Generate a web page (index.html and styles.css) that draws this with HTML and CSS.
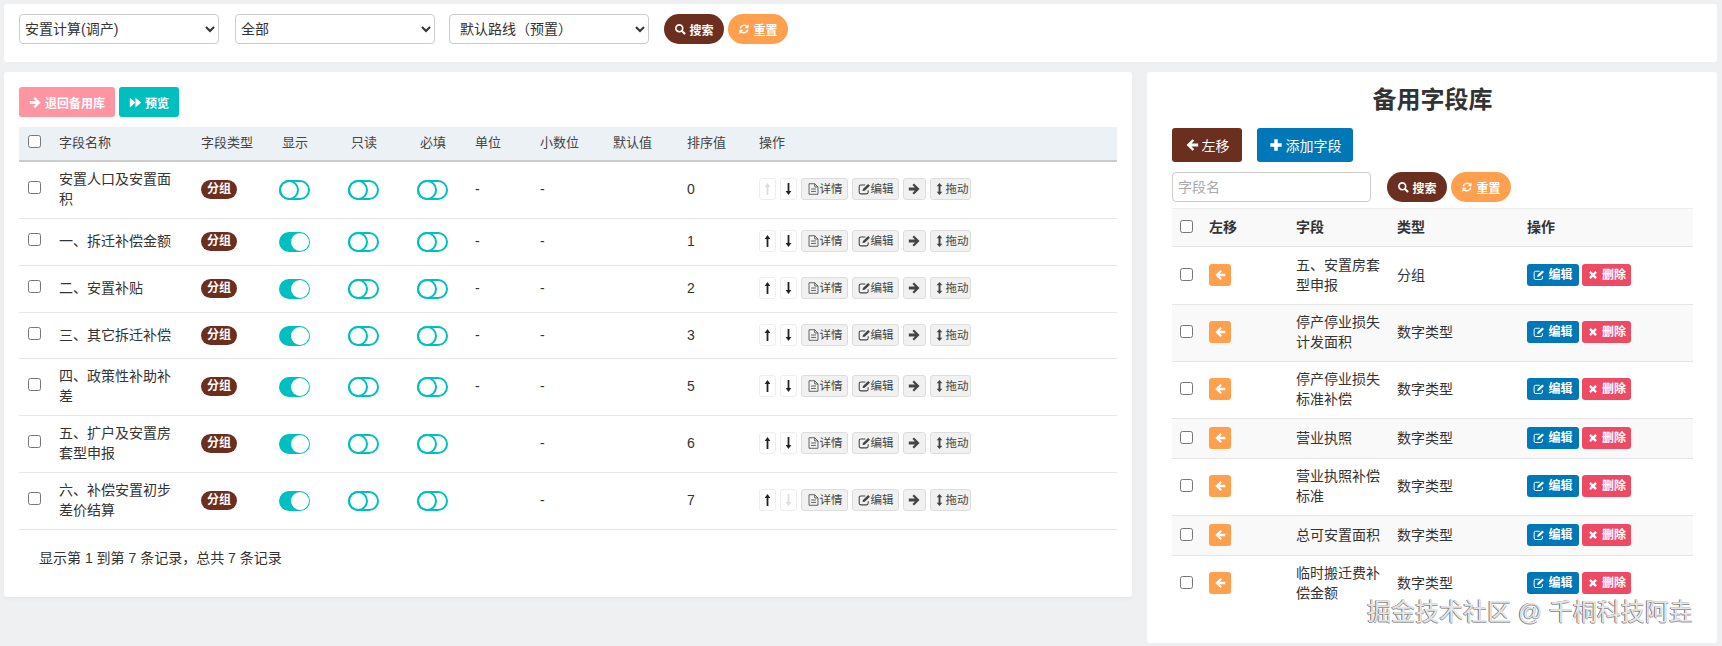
FILE: index.html
```html
<!DOCTYPE html>
<html lang="en">
<head>
    <meta charset="UTF-8">
    <title>字段配置</title>
    <link rel="stylesheet" href="styles.css">
</head>
<body>
    <svg class="icon-defs" xmlns="http://www.w3.org/2000/svg">
        <symbol id="i-search" viewBox="0 0 16 16"><circle cx="7" cy="7" r="4.6" fill="none" stroke="currentColor" stroke-width="2.2"/><path d="M10.5 10.5L14 14" stroke="currentColor" stroke-width="2.8" stroke-linecap="round"/></symbol>
        <symbol id="i-refresh" viewBox="0 0 16 16"><path d="M3 7a5.2 5.2 0 0 1 9-2.2M13 9a5.2 5.2 0 0 1-9 2.2" fill="none" stroke="currentColor" stroke-width="2"/><path d="M14 1.5V7H8.8zM2 14.5V9h5.2z" fill="currentColor"/></symbol>
        <symbol id="i-right" viewBox="0 0 16 16"><path d="M1 6.200h7.500L5.500 3.200 7.400 1.300 14.200 8l-6.800 6.700-1.900-1.900 3-3H1z" fill="currentColor"/></symbol>
        <symbol id="i-left" viewBox="0 0 16 16"><path d="M15 6.200H7.500l3-3L8.600 1.300 1.800 8l6.800 6.700 1.900-1.900-3-3H15z" fill="currentColor"/></symbol>
        <symbol id="i-forward" viewBox="0 0 16 16"><path d="M1 2L8 8l-7 6zM8 2L15 8l-7 6z" fill="currentColor"/></symbol>
        <symbol id="i-plus" viewBox="0 0 16 16"><path d="M6 1.500h4V6h4.500v4H10v4.500H6V10H1.500V6H6z" fill="currentColor"/></symbol>
        <symbol id="i-times" viewBox="0 0 16 16"><path d="M2.800 5l2.200-2.200 3 3 3-3L13.200 5l-3 3 3 3-2.200 2.200-3-3-3 3L2.800 11l3-3z" fill="currentColor"/></symbol>
        <symbol id="i-edit" viewBox="0 0 16 16"><path d="M12.500 9.500V12a2 2 0 0 1-2 2H3.500a2 2 0 0 1-2-2V5a2 2 0 0 1 2-2H9" fill="none" stroke="currentColor" stroke-width="1.300"/><path d="M5.500 10.500l.6-2.600 6.400-6 2.200 2.200-6.400 6z" fill="currentColor"/></symbol>
        <symbol id="i-file" viewBox="0 0 16 16"><path d="M2.500 1.500h7l4 4v9h-11zM9.500 1.500v4h4M5 8h6M5 11h6" fill="none" stroke="currentColor" stroke-width="1"/></symbol>
        <symbol id="i-up" viewBox="0 0 16 16"><path d="M8 .5L11.500 5.500H9.100v10H6.900v-10H4.500z" fill="currentColor"/></symbol>
        <symbol id="i-down" viewBox="0 0 16 16"><path d="M8 15.500L11.500 10.500H9.100V.5H6.900v10H4.500z" fill="currentColor"/></symbol>
        <symbol id="i-drag" viewBox="0 0 16 16"><path d="M8 .5L11.500 4.500H9.200v7h2.300L8 15.500 4.500 11.500h2.300v-7H4.500z" fill="currentColor"/></symbol>
    </svg>

    <div class="top-bar">
        <select class="top-select"><option>安置计算(调产)</option></select>
        <select class="top-select second-select"><option>全部</option></select>
        <select class="top-select route-select"><option>默认路线（预置）</option></select>
        <div class="pill-group">
            <button class="btn pill brown"><svg class="ico"><use href="#i-search"/></svg>搜索</button>
            <button class="btn pill orange"><svg class="ico"><use href="#i-refresh"/></svg>重置</button>
        </div>
    </div>

    <div class="main">
        <div class="panel left-panel">
            <div class="left-tools">
                <button class="btn tool pink"><svg class="ico"><use href="#i-right"/></svg>退回备用库</button>
                <button class="btn tool teal"><svg class="ico"><use href="#i-forward"/></svg>预览</button>
            </div>
            <table class="field-table">
                <colgroup>
                    <col class="c-check"><col class="c-name"><col class="c-type"><col class="c-sw"><col class="c-sw"><col class="c-unit"><col class="c-dec"><col class="c-def"><col class="c-order"><col class="c-order2"><col>
                </colgroup>
                <thead>
                    <tr>
                        <th><input type="checkbox"></th>
                        <th>字段名称</th><th>字段类型</th><th>显示</th><th>只读</th><th>必填</th><th>单位</th><th>小数位</th><th>默认值</th><th>排序值</th><th>操作</th>
                    </tr>
                </thead>
                <tbody>
                    <tr>
                        <td><input type="checkbox"></td><td>安置人口及安置面积</td><td><span class="tag">分组</span></td>
                        <td class="sw-cell"><span class="switch"></span></td><td class="sw-cell"><span class="switch"></span></td><td class="sw-cell"><span class="switch"></span></td>
                        <td>-</td><td>-</td><td></td><td>0</td>
                        <td><div class="ops"><span class="mini white off"><svg class="ico"><use href="#i-up"/></svg></span><span class="mini white"><svg class="ico"><use href="#i-down"/></svg></span><span class="mini w-detail"><svg class="ico"><use href="#i-file"/></svg>详情</span><span class="mini w-edit"><svg class="ico"><use href="#i-edit"/></svg>编辑</span><span class="mini w-move"><svg class="ico"><use href="#i-right"/></svg></span><span class="mini w-drag"><svg class="ico"><use href="#i-drag"/></svg>拖动</span></div></td>
                    </tr>
                    <tr>
                        <td><input type="checkbox"></td><td>一、拆迁补偿金额</td><td><span class="tag">分组</span></td>
                        <td class="sw-cell"><span class="switch on"></span></td><td class="sw-cell"><span class="switch"></span></td><td class="sw-cell"><span class="switch"></span></td>
                        <td>-</td><td>-</td><td></td><td>1</td>
                        <td><div class="ops"><span class="mini white"><svg class="ico"><use href="#i-up"/></svg></span><span class="mini white"><svg class="ico"><use href="#i-down"/></svg></span><span class="mini w-detail"><svg class="ico"><use href="#i-file"/></svg>详情</span><span class="mini w-edit"><svg class="ico"><use href="#i-edit"/></svg>编辑</span><span class="mini w-move"><svg class="ico"><use href="#i-right"/></svg></span><span class="mini w-drag"><svg class="ico"><use href="#i-drag"/></svg>拖动</span></div></td>
                    </tr>
                    <tr>
                        <td><input type="checkbox"></td><td>二、安置补贴</td><td><span class="tag">分组</span></td>
                        <td class="sw-cell"><span class="switch on"></span></td><td class="sw-cell"><span class="switch"></span></td><td class="sw-cell"><span class="switch"></span></td>
                        <td>-</td><td>-</td><td></td><td>2</td>
                        <td><div class="ops"><span class="mini white"><svg class="ico"><use href="#i-up"/></svg></span><span class="mini white"><svg class="ico"><use href="#i-down"/></svg></span><span class="mini w-detail"><svg class="ico"><use href="#i-file"/></svg>详情</span><span class="mini w-edit"><svg class="ico"><use href="#i-edit"/></svg>编辑</span><span class="mini w-move"><svg class="ico"><use href="#i-right"/></svg></span><span class="mini w-drag"><svg class="ico"><use href="#i-drag"/></svg>拖动</span></div></td>
                    </tr>
                    <tr>
                        <td><input type="checkbox"></td><td>三、其它拆迁补偿</td><td><span class="tag">分组</span></td>
                        <td class="sw-cell"><span class="switch on"></span></td><td class="sw-cell"><span class="switch"></span></td><td class="sw-cell"><span class="switch"></span></td>
                        <td>-</td><td>-</td><td></td><td>3</td>
                        <td><div class="ops"><span class="mini white"><svg class="ico"><use href="#i-up"/></svg></span><span class="mini white"><svg class="ico"><use href="#i-down"/></svg></span><span class="mini w-detail"><svg class="ico"><use href="#i-file"/></svg>详情</span><span class="mini w-edit"><svg class="ico"><use href="#i-edit"/></svg>编辑</span><span class="mini w-move"><svg class="ico"><use href="#i-right"/></svg></span><span class="mini w-drag"><svg class="ico"><use href="#i-drag"/></svg>拖动</span></div></td>
                    </tr>
                    <tr>
                        <td><input type="checkbox"></td><td>四、政策性补助补差</td><td><span class="tag">分组</span></td>
                        <td class="sw-cell"><span class="switch on"></span></td><td class="sw-cell"><span class="switch"></span></td><td class="sw-cell"><span class="switch"></span></td>
                        <td>-</td><td>-</td><td></td><td>5</td>
                        <td><div class="ops"><span class="mini white"><svg class="ico"><use href="#i-up"/></svg></span><span class="mini white"><svg class="ico"><use href="#i-down"/></svg></span><span class="mini w-detail"><svg class="ico"><use href="#i-file"/></svg>详情</span><span class="mini w-edit"><svg class="ico"><use href="#i-edit"/></svg>编辑</span><span class="mini w-move"><svg class="ico"><use href="#i-right"/></svg></span><span class="mini w-drag"><svg class="ico"><use href="#i-drag"/></svg>拖动</span></div></td>
                    </tr>
                    <tr>
                        <td><input type="checkbox"></td><td>五、扩户及安置房套型申报</td><td><span class="tag">分组</span></td>
                        <td class="sw-cell"><span class="switch on"></span></td><td class="sw-cell"><span class="switch"></span></td><td class="sw-cell"><span class="switch"></span></td>
                        <td></td><td>-</td><td></td><td>6</td>
                        <td><div class="ops"><span class="mini white"><svg class="ico"><use href="#i-up"/></svg></span><span class="mini white"><svg class="ico"><use href="#i-down"/></svg></span><span class="mini w-detail"><svg class="ico"><use href="#i-file"/></svg>详情</span><span class="mini w-edit"><svg class="ico"><use href="#i-edit"/></svg>编辑</span><span class="mini w-move"><svg class="ico"><use href="#i-right"/></svg></span><span class="mini w-drag"><svg class="ico"><use href="#i-drag"/></svg>拖动</span></div></td>
                    </tr>
                    <tr>
                        <td><input type="checkbox"></td><td>六、补偿安置初步差价结算</td><td><span class="tag">分组</span></td>
                        <td class="sw-cell"><span class="switch on"></span></td><td class="sw-cell"><span class="switch"></span></td><td class="sw-cell"><span class="switch"></span></td>
                        <td></td><td>-</td><td></td><td>7</td>
                        <td><div class="ops"><span class="mini white"><svg class="ico"><use href="#i-up"/></svg></span><span class="mini white off"><svg class="ico"><use href="#i-down"/></svg></span><span class="mini w-detail"><svg class="ico"><use href="#i-file"/></svg>详情</span><span class="mini w-edit"><svg class="ico"><use href="#i-edit"/></svg>编辑</span><span class="mini w-move"><svg class="ico"><use href="#i-right"/></svg></span><span class="mini w-drag"><svg class="ico"><use href="#i-drag"/></svg>拖动</span></div></td>
                    </tr>
                </tbody>
            </table>
            <div class="table-info">显示第 1 到第 7 条记录，总共 7 条记录</div>
        </div>

        <div class="panel right-panel">
            <h2 class="lib-title">备用字段库</h2>
            <div class="lib-tools">
                <button class="btn big brown"><svg class="ico"><use href="#i-left"/></svg>左移</button>
                <button class="btn big blue"><svg class="ico"><use href="#i-plus"/></svg>添加字段</button>
            </div>
            <div class="lib-search">
                <input class="lib-input" type="text" placeholder="字段名">
                <div class="pill-group">
                    <button class="btn pill brown"><svg class="ico"><use href="#i-search"/></svg>搜索</button>
                    <button class="btn pill orange"><svg class="ico"><use href="#i-refresh"/></svg>重置</button>
                </div>
            </div>
            <table class="lib-table">
                <colgroup><col class="l-check"><col class="l-move"><col class="l-name"><col class="l-type"><col></colgroup>
                <thead>
                    <tr><th><input type="checkbox"></th><th>左移</th><th>字段</th><th>类型</th><th>操作</th></tr>
                </thead>
                <tbody>
                    <tr><td><input type="checkbox"></td><td><span class="btn sm-icon orange"><svg class="ico"><use href="#i-left"/></svg></span></td><td>五、安置房套型申报</td><td>分组</td><td><div class="lib-ops"><span class="btn sm blue"><svg class="ico"><use href="#i-edit"/></svg>编辑</span><span class="btn sm red"><svg class="ico"><use href="#i-times"/></svg>删除</span></div></td></tr>
                    <tr><td><input type="checkbox"></td><td><span class="btn sm-icon orange"><svg class="ico"><use href="#i-left"/></svg></span></td><td>停产停业损失计发面积</td><td>数字类型</td><td><div class="lib-ops"><span class="btn sm blue"><svg class="ico"><use href="#i-edit"/></svg>编辑</span><span class="btn sm red"><svg class="ico"><use href="#i-times"/></svg>删除</span></div></td></tr>
                    <tr><td><input type="checkbox"></td><td><span class="btn sm-icon orange"><svg class="ico"><use href="#i-left"/></svg></span></td><td>停产停业损失标准补偿</td><td>数字类型</td><td><div class="lib-ops"><span class="btn sm blue"><svg class="ico"><use href="#i-edit"/></svg>编辑</span><span class="btn sm red"><svg class="ico"><use href="#i-times"/></svg>删除</span></div></td></tr>
                    <tr><td><input type="checkbox"></td><td><span class="btn sm-icon orange"><svg class="ico"><use href="#i-left"/></svg></span></td><td>营业执照</td><td>数字类型</td><td><div class="lib-ops"><span class="btn sm blue"><svg class="ico"><use href="#i-edit"/></svg>编辑</span><span class="btn sm red"><svg class="ico"><use href="#i-times"/></svg>删除</span></div></td></tr>
                    <tr><td><input type="checkbox"></td><td><span class="btn sm-icon orange"><svg class="ico"><use href="#i-left"/></svg></span></td><td>营业执照补偿标准</td><td>数字类型</td><td><div class="lib-ops"><span class="btn sm blue"><svg class="ico"><use href="#i-edit"/></svg>编辑</span><span class="btn sm red"><svg class="ico"><use href="#i-times"/></svg>删除</span></div></td></tr>
                    <tr><td><input type="checkbox"></td><td><span class="btn sm-icon orange"><svg class="ico"><use href="#i-left"/></svg></span></td><td>总可安置面积</td><td>数字类型</td><td><div class="lib-ops"><span class="btn sm blue"><svg class="ico"><use href="#i-edit"/></svg>编辑</span><span class="btn sm red"><svg class="ico"><use href="#i-times"/></svg>删除</span></div></td></tr>
                    <tr><td><input type="checkbox"></td><td><span class="btn sm-icon orange"><svg class="ico"><use href="#i-left"/></svg></span></td><td>临时搬迁费补偿金额</td><td>数字类型</td><td><div class="lib-ops"><span class="btn sm blue"><svg class="ico"><use href="#i-edit"/></svg>编辑</span><span class="btn sm red"><svg class="ico"><use href="#i-times"/></svg>删除</span></div></td></tr>
                </tbody>
            </table>
        </div>
    </div>

    <div class="watermark">掘金技术社区 @ 千桐科技阿垚</div>
</body>
</html>
```

FILE: styles.css
```css
html, body {
    height: 646px;
    overflow: hidden;
}
body {
    font-family: "Liberation Sans", "Noto Sans CJK SC", sans-serif;
    font-size: 14px;
    line-height: 20px;
    color: #333;
    margin: 0;
    padding: 4px 5px 0 4px;
    box-sizing: border-box;
    background-color: #eff0f1;
    position: relative;
}
.icon-defs {
    display: none;
}
.ico {
    width: 12px;
    height: 12px;
    flex: none;
}
.top-bar {
    background: #fff;
    border-radius: 3px;
    height: 58px;
    box-sizing: border-box;
    padding: 10px 15px;
    display: flex;
    align-items: flex-start;
}
.top-select {
    width: 200px;
    height: 30px;
    margin-right: 16px;
    padding: 0 0 0 1px;
    font-family: inherit;
    font-size: 14px;
    color: #333;
    background: #fff;
    border: 1px solid #ccc;
    border-radius: 4px;
}
.second-select {
    margin-right: 14px;
}
.route-select {
    padding-left: 6px;
    margin-right: 15px;
}
.pill-group {
    display: flex;
    gap: 4px;
}
.btn {
    display: inline-flex;
    align-items: center;
    justify-content: center;
    gap: 3px;
    color: #fff;
    border: 0;
    padding: 0;
    font-family: inherit;
    font-size: 12px;
    font-weight: normal;
    box-sizing: border-box;
}
.pill {
    width: 60px;
    height: 30px;
    border-radius: 15px;
    font-weight: bold;
}
.brown { background: #6b2f20; }
.orange { background: #ffa04f; }
.pink { background: #fd95a3; }
.teal { background: #00bfbf; }
.blue { background: #0077b6; }
.red { background: #ef4a64; }

.main {
    display: flex;
    align-items: flex-start;
    gap: 15px;
    margin-top: 10px;
}
.panel {
    background: #fff;
    border-radius: 3px;
    box-sizing: border-box;
}
.left-panel {
    width: 1128px;
    padding: 15px 15px 29px;
    box-shadow: 0 2px 4px rgba(0, 0, 0, 0.03);
}
.right-panel {
    width: 570px;
    padding: 0 24px 31px 25px;
}
.left-tools {
    display: flex;
    gap: 4px;
    margin-bottom: 10px;
}
.tool {
    height: 30px;
    border-radius: 3px;
    font-weight: bold;
}
.tool .ico {
    width: 13px;
    height: 13px;
}
.tool.pink { width: 96px; }
.tool.teal { width: 60px; }

.field-table,
.lib-table {
    width: 100%;
    table-layout: fixed;
    border-collapse: collapse;
}
.field-table th {
    height: 34px;
    padding: 0 8px 2px;
    font-size: 13px;
    font-weight: normal;
    color: #444;
    text-align: left;
    background: #ecf1f6;
    border-bottom: 2px solid #ccc;
    box-sizing: border-box;
}
.field-table td {
    height: 47px;
    padding: 7px 8px 9px;
    border-bottom: 1px solid #e7e7e7;
    box-sizing: border-box;
}
.field-table tbody tr:nth-child(4) td {
    height: 46px;
}
.field-table td:nth-child(2) {
    padding-right: 20px;
}
.field-table td.sw-cell {
    padding: 8px;
    line-height: 0;
}
.field-table input,
.lib-table input {
    display: block;
    margin: 0;
}
.field-table input {
    margin-top: -3px;
}
.field-table th:first-child,
.field-table td:first-child {
    padding-left: 9px;
}
.c-check { width: 32px; }
.c-name { width: 142px; }
.c-type { width: 81px; }
.c-sw { width: 69px; }
.c-unit { width: 55px; }
.c-dec { width: 65px; }
.c-def { width: 73px; }
.c-order { width: 74px; }
.c-order2 { width: 72px; }

.tag {
    display: inline-block;
    width: 36px;
    height: 19px;
    line-height: 19px;
    border-radius: 10px;
    background: #6b2f20;
    color: #fff;
    font-size: 12px;
    font-weight: bold;
    text-align: center;
    vertical-align: 1px;
}
.switch {
    display: inline-block;
    position: relative;
    width: 31px;
    height: 20px;
    margin-left: -3px;
    border: 2px solid #00bfbf;
    border-radius: 10px;
    box-sizing: border-box;
}
.switch::after {
    content: "";
    position: absolute;
    left: -2px;
    top: -2px;
    width: 20px;
    height: 20px;
    border: 2px solid #00bfbf;
    border-radius: 50%;
    box-sizing: border-box;
}
.switch.on {
    background: #00bfbf;
}
.switch.on::after {
    left: auto;
    right: -1px;
    top: -1px;
    width: 18px;
    height: 18px;
    background: #fff;
    border: 0;
}
.ops {
    display: flex;
    gap: 4px;
}
.mini {
    display: inline-flex;
    align-items: center;
    justify-content: center;
    height: 22px;
    font-size: 11.5px;
    color: #444;
    background: #f1f1f1;
    border: 1px solid #ddd;
    border-radius: 3px;
    box-sizing: border-box;
}
.mini .ico {
    width: 13px;
    height: 14px;
}
.mini.white {
    width: 17px;
    color: #222;
    background: #fff;
    border-color: #eee;
}
.mini.off {
    color: #ddd;
}
.w-detail { width: 47px; }
.w-edit { width: 47px; }
.w-move { width: 23px; }
.w-drag { width: 41px; }
.table-info {
    margin-top: 18px;
    padding-left: 20px;
    font-size: 14px;
}

.lib-title {
    margin: 0;
    padding: 11px 0 11px;
    height: 34px;
    line-height: 34px;
    box-sizing: content-box;
    font-size: 24px;
    font-weight: bold;
    text-align: center;
}
.lib-tools {
    display: flex;
    gap: 15px;
}
.big {
    height: 34px;
    font-size: 14px;
    border-radius: 3px;
    gap: 3px;
}
.big .ico {
    width: 14px;
    height: 14px;
}
.big.brown { width: 70px; }
.big.blue { width: 96px; }
.lib-search {
    display: flex;
    gap: 16px;
    margin: 10px 0 6px;
}
.lib-input {
    width: 199px;
    height: 30px;
    padding: 0 5px;
    font-family: inherit;
    font-size: 14px;
    border: 1px solid #ccc;
    border-radius: 4px;
    box-sizing: border-box;
}
.lib-input::placeholder {
    color: #aaa;
}
.lib-table th {
    height: 38px;
    padding: 0 8px 2px;
    text-align: left;
    font-weight: bold;
    background: #f9f9f9;
    border-top: 1px solid #eee;
    border-bottom: 1px solid #e5e5e5;
    box-sizing: border-box;
}
.lib-table td {
    height: 40px;
    padding: 7px 8px 9px;
    border-bottom: 1px solid #e5e5e5;
    box-sizing: border-box;
}
.lib-table td input {
    margin-top: -1px;
}
.lib-table tbody tr:first-child td {
    padding-top: 8px;
}
.lib-table tbody tr:nth-child(even) td {
    background: #f9f9f9;
}
.lib-table tbody tr:last-child td {
    border-bottom: 0;
}
.l-check { width: 29px; }
.l-move { width: 87px; }
.l-name { width: 101px; }
.l-type { width: 130px; }
.sm-icon {
    display: flex;
    width: 22px;
    height: 22px;
    border-radius: 3px;
}
.lib-ops {
    display: flex;
    gap: 3px;
}
.sm {
    height: 22px;
    border-radius: 3px;
    font-weight: bold;
}
.sm.blue { width: 52px; }
.sm.red { width: 49px; }

.watermark {
    position: absolute;
    right: 29px;
    top: 598px;
    font-size: 24px;
    line-height: 28px;
    color: #e6e6e6;
    text-shadow: -1px 0 #777, 0 1px #999;
    white-space: nowrap;
}
```
